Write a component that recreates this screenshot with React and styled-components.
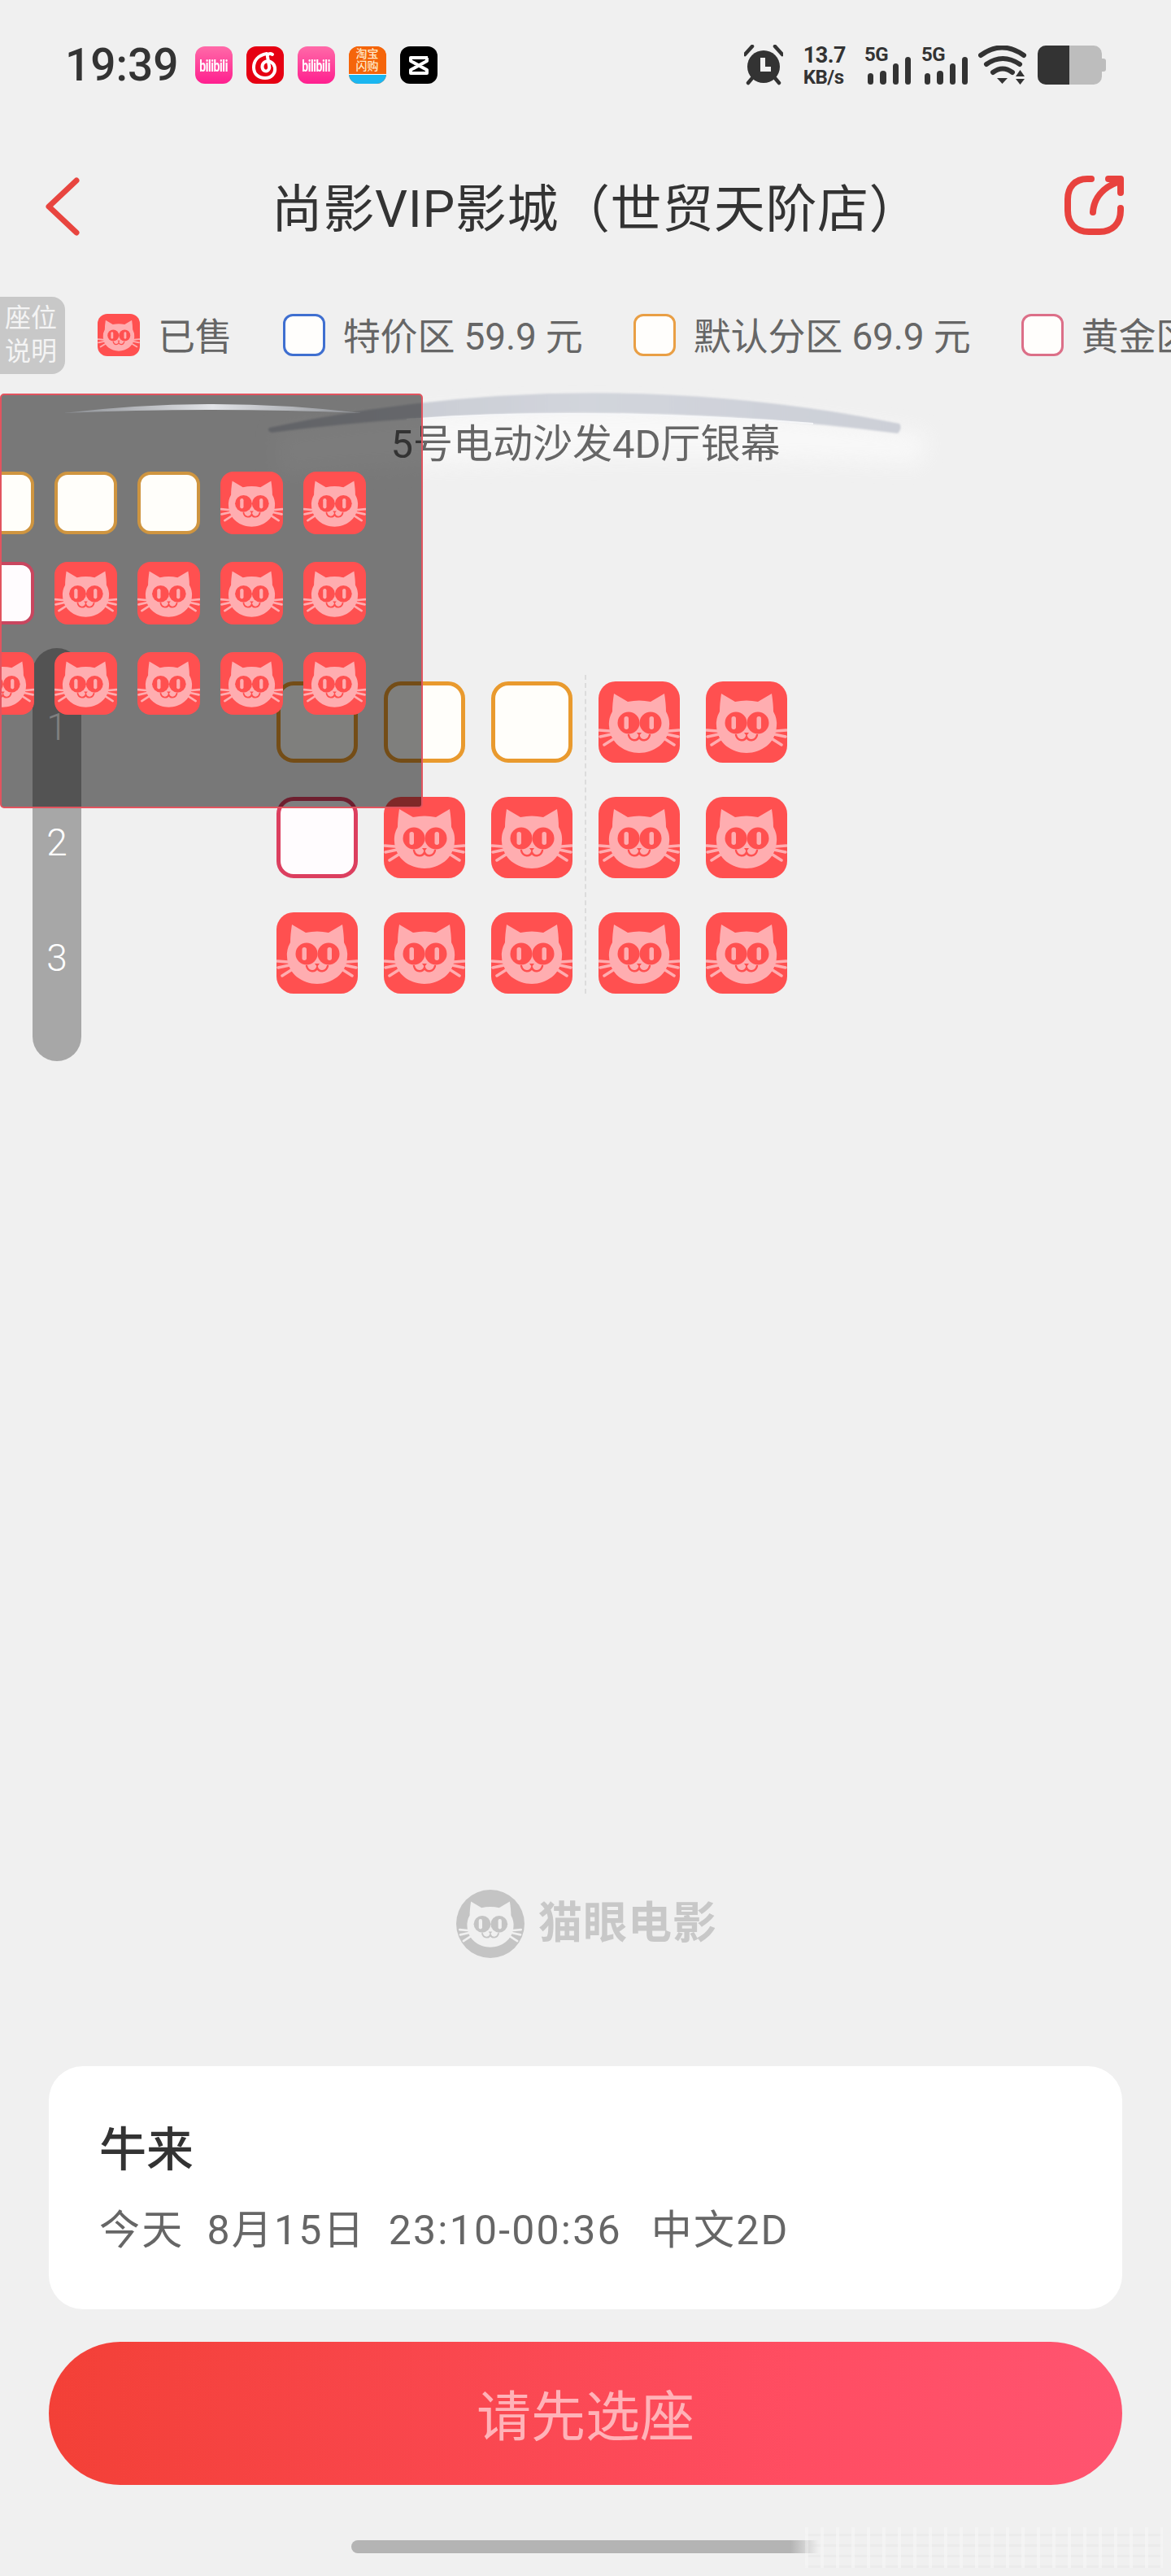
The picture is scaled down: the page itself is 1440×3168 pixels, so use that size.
import React from 'react';
import styled, { createGlobalStyle } from 'styled-components';

const GlobalStyle = createGlobalStyle`
  html, body {
    margin: 0;
    padding: 0;
    background: #f0f0f0;
  }
  * {
    box-sizing: border-box;
  }
`;

const FONT = `Roboto, "Noto Sans CJK SC", sans-serif`;

const Page = styled.div`
  width: 1440px;
  height: 3168px;
  display: flex;
  flex-direction: column;
  overflow: hidden;
  background: #f0f0f0;
  font-family: ${FONT};
  color: #333;
`;

/* status bar */
const StatusBar = styled.div`
  height: 160px;
  flex: none;
  display: flex;
  align-items: center;
  padding: 0 80px;
`;

const Time = styled.div`
  font-size: 55px;
  font-weight: 500;
  line-height: 1;
  color: #333;
  margin-right: 20px;
`;

const AppIcons = styled.div`
  display: flex;
  gap: 17px;
`;

const AppIcon = styled.div`
  width: 46px;
  height: 46px;
  border-radius: 12px;
  overflow: hidden;
  display: flex;
  flex-direction: column;
  align-items: center;
  justify-content: center;
  background: ${(p) => p.$bg};
  color: #fff;
`;

const BiliText = styled.span`
  font-size: 14px;
  font-weight: 700;
  letter-spacing: -0.4px;
  line-height: 1;
  transform: scaleY(1.5);
`;

const TaobaoTop = styled.div`
  flex: 1;
  width: 100%;
  display: flex;
  align-items: center;
  justify-content: center;
  text-align: center;
  background: #f5650a;
  color: #ffe9c8;
  font-size: 14px;
  line-height: 15px;
  font-weight: 500;
`;

const TaobaoBottom = styled.div`
  height: 12px;
  width: 100%;
  flex: none;
  background: #1bb6f0;
  border-top: 1px solid #fff;
`;

const StatusRight = styled.div`
  margin-left: auto;
  display: flex;
  align-items: center;
  gap: 13px;
`;

const Speed = styled.div`
  display: flex;
  flex-direction: column;
  gap: 5px;
  margin: 0 10px 0 12px;
  font-weight: 700;
  color: #333;
`;

const SpeedValue = styled.span`
  font-size: 27px;
  line-height: 24px;
  letter-spacing: -0.5px;
`;

const SpeedUnit = styled.span`
  font-size: 24px;
  line-height: 20px;
  letter-spacing: -0.5px;
`;

const Signal = styled.div`
  position: relative;
  width: 57px;
  height: 48px;
  display: flex;
  align-items: flex-end;
  gap: 8px;
  padding-left: 4px;
`;

const SignalLabel = styled.span`
  position: absolute;
  left: 0;
  top: 0;
  font-size: 24px;
  font-weight: 700;
  line-height: 22px;
  letter-spacing: -0.5px;
  color: #333;
`;

const SignalBar = styled.div`
  width: 8px;
  height: ${(p) => p.$h}px;
  border-radius: 4px;
  background: #333;
`;

const Battery = styled.div`
  position: relative;
  width: 79px;
  height: 48px;
  margin-right: 5px;
  border-radius: 10px;
  background: #bdbdbd;

  &::after {
    content: '';
    position: absolute;
    right: -5px;
    top: 16px;
    width: 5px;
    height: 16px;
    border-radius: 0 3px 3px 0;
    background: #bdbdbd;
  }
`;

const BatteryLevel = styled.div`
  width: 39px;
  height: 100%;
  border-radius: 10px 0 0 10px;
  background: #333;
`;

/* nav */
const Nav = styled.div`
  height: 188px;
  flex: none;
  display: flex;
  align-items: center;
  justify-content: space-between;
  padding: 0 56px;
`;

const Title = styled.div`
  font-size: 63px;
  font-weight: 400;
  line-height: 1.2;
  letter-spacing: 0.6px;
  padding: 8px 0 0 60px;
  color: #333;
  white-space: nowrap;
`;

/* legend */
const Legend = styled.div`
  height: 128px;
  flex: none;
  display: flex;
  align-items: center;
  gap: 62px;
  overflow: hidden;
  white-space: nowrap;
`;

const SeatNote = styled.div`
  width: 80px;
  height: 95px;
  flex: none;
  margin-right: -22px;
  padding-left: 6px;
  border-radius: 0 16px 16px 0;
  background: #c8c8c8;
  color: #f4f4f4;
  font-size: 32px;
  line-height: 41px;
  display: flex;
  align-items: center;
`;

const LegendItem = styled.div`
  display: flex;
  align-items: center;
  gap: 22px;
  flex: none;
  font-size: 46px;
  line-height: 52px;
  color: #666;
`;

const LegendText = styled.span`
  padding-top: 3px;
  letter-spacing: -0.15px;
`;

const LegendSold = styled.div`
  width: 52px;
  height: 52px;
  border-radius: 12px;
  overflow: hidden;
`;

const LegendBox = styled.div`
  width: 52px;
  height: 52px;
  border-radius: 12px;
  background: #fffefc;
  border: 3px solid ${(p) => p.$color};
`;

/* hall */
const Hall = styled.div`
  position: relative;
  flex: 1;
  min-height: 0;
`;

const ScreenBlock = styled.div`
  position: relative;
  display: flex;
  justify-content: center;
  padding-top: 42px;
`;

const ScreenArc = styled.svg`
  position: absolute;
  left: 300px;
  top: -30px;
  width: 860px;
  height: 170px;
`;

const ScreenLabel = styled.div`
  position: relative;
  font-size: 49px;
  line-height: 58px;
  color: #666;
  white-space: nowrap;
`;

const SeatGrid = styled.div`
  position: relative;
  display: grid;
  grid-template-columns: repeat(5, 100px);
  gap: 42px 32px;
  width: 628px;
  margin: 262px 0 0 340px;
`;

const CenterLine = styled.div`
  position: absolute;
  left: 379px;
  top: -8px;
  bottom: 0;
  border-left: 2px dashed #dcdcdc;
`;

const Seat = styled.div`
  width: ${(p) => (p.$mini ? 77 : 100)}px;
  height: ${(p) => (p.$mini ? 77 : 100)}px;
  border-radius: ${(p) => (p.$mini ? 16 : 21)}px;
  overflow: hidden;
  ${(p) =>
    p.$border
      ? `border: ${p.$mini ? 4 : 5}px solid ${p.$border}; background: ${p.$fill};`
      : ''}
`;

const RowRail = styled.div`
  position: absolute;
  left: 40px;
  top: 321px;
  width: 60px;
  height: 508px;
  padding-top: 67px;
  border-radius: 30px;
  background: rgba(0, 0, 0, 0.3);
  display: flex;
  flex-direction: column;
  align-items: center;
  gap: 82px;
`;

const RowNumber = styled.div`
  font-size: 46px;
  line-height: 60px;
  font-weight: 300;
  color: #fff;
`;

const MiniMap = styled.div`
  position: absolute;
  left: 0;
  top: 8px;
  width: 520px;
  height: 510px;
  border: 2px solid #e2545f;
  border-radius: 5px;
  background: rgba(0, 0, 0, 0.5);
  overflow: hidden;
`;

const MiniArc = styled.svg`
  position: absolute;
  left: 70px;
  top: 4px;
  width: 380px;
  height: 24px;
`;

const MiniGrid = styled.div`
  display: grid;
  grid-template-columns: repeat(5, 77px);
  gap: 34px 25px;
  width: 485px;
  margin: 94px 0 0 -37px;
`;

/* logo */
const LogoRow = styled.div`
  flex: none;
  height: 84px;
  margin-bottom: 133px;
  display: flex;
  align-items: center;
  padding-left: 561px;
  gap: 17px;
`;

const LogoText = styled.div`
  font-size: 54px;
  font-weight: 700;
  line-height: 1;
  letter-spacing: 1px;
  color: #c8c8c8;
`;

/* bottom */
const InfoCard = styled.div`
  flex: none;
  height: 299px;
  margin: 0 60px;
  padding: 66px 62px 0;
  border-radius: 42px;
  background: #fff;
`;

const MovieName = styled.div`
  font-size: 58px;
  font-weight: 500;
  line-height: 74px;
  color: #333;
`;

const ShowInfo = styled.div`
  display: flex;
  gap: 28px;
  margin-top: 30px;
  font-size: 50px;
  line-height: 64px;
  letter-spacing: 2.2px;
  color: #666;
  white-space: nowrap;
`;

const ShowLang = styled.span`
  margin-left: 8px;
`;

const ConfirmButton = styled.div`
  flex: none;
  height: 176px;
  margin: 40px 60px 0;
  padding-bottom: 3px;
  border-radius: 88px;
  background: linear-gradient(90deg, #f34037 0%, #ff4d62 70%, #ff5470 100%);
  color: #ffb2b8;
  font-size: 67px;
  display: flex;
  align-items: center;
  justify-content: center;
`;

const HomeArea = styled.div`
  position: relative;
  flex: none;
  height: 112px;
  padding: 68px 0 0 432px;
`;

const HomeBar = styled.div`
  width: 575px;
  height: 16px;
  border-radius: 8px 0 0 8px;
  background: linear-gradient(90deg, #b4b4b4 0 94%, rgba(180, 180, 180, 0) 100%);
`;

const Watermark = styled.div`
  position: absolute;
  left: 990px;
  top: 52px;
  width: 440px;
  height: 50px;
  opacity: 0.4;
  background:
    repeating-linear-gradient(90deg, rgba(255, 255, 255, 0.7) 0 4px, transparent 4px 19px),
    repeating-linear-gradient(0deg, rgba(215, 215, 215, 0.5) 0 3px, transparent 3px 13px);
`;

const CatFace = ({ head = '#ffadb0', eye = '#ff5050', transform }) => (
  <g transform={transform}>
    <path
      d="M19 15 L36 25 Q50 22 64 25 L81 15 Q83 28 83 37 Q88 46 87 55 C86 76 68 88 50 88 C32 88 14 76 13 55 Q12 46 17 37 Q17 28 19 15 Z"
      fill={head}
    />
    <g stroke={head} strokeWidth="3.5" strokeLinecap="round" fill="none">
      <path d="M1 60 L14 61 M2 68 L16 65 M7 78 L18 71" />
      <path d="M99 60 L86 61 M98 68 L84 65 M93 78 L82 71" />
    </g>
    <circle cx="37" cy="51" r="13.5" fill={eye} />
    <circle cx="64" cy="51" r="13.5" fill={eye} />
    <rect x="31.5" y="43" width="5.5" height="16" rx="2.7" fill={head} />
    <rect x="62.5" y="43" width="5.5" height="16" rx="2.7" fill={head} />
    <path
      d="M37 66 C39 74 48 74 50 68 C52 74 61 74 63 66"
      fill="none"
      stroke={eye}
      strokeWidth="2.4"
      strokeLinecap="round"
    />
    <path d="M47 63 L53 63 L50 67 Z" fill={eye} />
  </g>
);

const SoldIcon = () => (
  <svg viewBox="0 0 100 100" width="100%" height="100%" style={{ display: 'block' }}>
    <rect width="100" height="100" fill="#ff5050" />
    <CatFace />
  </svg>
);

const Bili = () => (
  <AppIcon $bg="linear-gradient(180deg, #ff6aa8, #ff1f8f)">
    <BiliText>bilibili</BiliText>
  </AppIcon>
);

const BackIcon = () => (
  <svg width="44" height="72" viewBox="0 0 44 72" fill="none">
    <path d="M38 4 L4 36 L38 68" stroke="#e8453f" strokeWidth="7" strokeLinecap="round" strokeLinejoin="round" />
  </svg>
);

const ShareIcon = () => (
  <svg width="78" height="78" viewBox="1305 214 78 78" fill="none" stroke="#e8423e" strokeWidth="8" strokeLinecap="round" strokeLinejoin="round">
    <path d="M1341 219 L1336 219 C1321 219 1312 229 1312 244 L1312 258 C1312 274 1322 284 1338 284 L1351 284 C1367 284 1377 274 1377 258 L1377 255" />
    <path d="M1343 260 C1344 243 1355 230 1373 223" />
    <path d="M1362 219 L1377 219 L1377 236" />
  </svg>
);

const AlarmIcon = () => (
  <svg width="48" height="50" viewBox="0 0 48 50">
    <circle cx="24" cy="27" r="20" fill="#333" />
    <path d="M1 12 L10 2 M47 12 L38 2 M5 47 L10 41 M43 47 L38 41" stroke="#333" strokeWidth="4.5" strokeLinecap="round" />
    <path d="M23 16 L23 30 L33 30" fill="none" stroke="#f0f0f0" strokeWidth="6" />
  </svg>
);

const WifiIcon = () => (
  <svg width="60" height="48" viewBox="0 0 60 48" fill="none">
    <path d="M3 12 Q29 -7 56 12" stroke="#333" strokeWidth="6" strokeLinecap="round" />
    <path d="M10 23 Q30 9 51 23" stroke="#333" strokeWidth="6" strokeLinecap="round" />
    <path d="M18 33 Q30 24 42 33" stroke="#333" strokeWidth="6" strokeLinecap="round" />
    <path d="M23 40 L36 40 L29.5 47 Z M46 38 L57 38 L51.5 30 Z M46 41 L57 41 L51.5 48 Z" fill="#333" />
  </svg>
);

const NeteaseIcon = () => (
  <svg width="46" height="46" viewBox="0 0 46 46" fill="none">
    <path
      d="M25 9 C14 11 9 18 9 26 C9 34 15 39 23 39 C31 39 36 33 35 26 C34 20 28 17 23 19 C19 21 18 27 22 30 C26 32 29 28 28 24 L26 13 C25.5 9 29 8 32 10"
      stroke="#fff"
      strokeWidth="4"
      strokeLinecap="round"
    />
  </svg>
);

const CapcutIcon = () => (
  <svg width="46" height="46" viewBox="0 0 46 46" fill="none">
    <path d="M34 14 L13 14 L13 18 L33 29 L33 33 L13 33 L13 29 L33 18 L33 14" stroke="#fff" strokeWidth="4" strokeLinejoin="round" />
  </svg>
);

const bars = [14, 17, 26, 34];

const SignalIcon = () => (
  <Signal>
    <SignalLabel>5G</SignalLabel>
    {bars.map((h, i) => (
      <SignalBar key={i} $h={h} />
    ))}
  </Signal>
);

// o = orange seat, p = pink seat, x = sold
const allSeats = 'oooxxpxxxxxxxxx'.split('');

const SeatCell = ({ kind, mini }) => {
  if (kind === 'x') {
    return (
      <Seat $mini={mini}>
        <SoldIcon />
      </Seat>
    );
  }
  const fill = kind === 'o' ? '#fffefa' : '#fffcfe';
  if (mini) {
    return <Seat $mini $fill={fill} $border={kind === 'o' ? '#cf9540' : '#c9465f'} />;
  }
  return <Seat $fill={fill} $border={kind === 'o' ? '#e99a2e' : '#dc3f5f'} />;
};

const App = () => {
  return (
    <Page>
      <GlobalStyle />
      <StatusBar>
        <Time>19:39</Time>
        <AppIcons>
          <Bili />
          <AppIcon $bg="#e60012">
            <NeteaseIcon />
          </AppIcon>
          <Bili />
          <AppIcon $bg="#f5650a">
            <TaobaoTop>
              淘宝
              <br />
              闪购
            </TaobaoTop>
            <TaobaoBottom />
          </AppIcon>
          <AppIcon $bg="#000">
            <CapcutIcon />
          </AppIcon>
        </AppIcons>
        <StatusRight>
          <AlarmIcon />
          <Speed>
            <SpeedValue>13.7</SpeedValue>
            <SpeedUnit>KB/s</SpeedUnit>
          </Speed>
          <SignalIcon />
          <SignalIcon />
          <WifiIcon />
          <Battery>
            <BatteryLevel />
          </Battery>
        </StatusRight>
      </StatusBar>

      <Nav>
        <BackIcon />
        <Title>尚影VIP影城（世贸天阶店）</Title>
        <ShareIcon />
      </Nav>

      <Legend>
        <SeatNote>
          座位
          <br />
          说明
        </SeatNote>
        <LegendItem>
          <LegendSold>
            <SoldIcon />
          </LegendSold>
          <LegendText>已售</LegendText>
        </LegendItem>
        <LegendItem>
          <LegendBox $color="#3f6fd0" />
          <LegendText>特价区 59.9 元</LegendText>
        </LegendItem>
        <LegendItem>
          <LegendBox $color="#e99f45" />
          <LegendText>默认分区 69.9 元</LegendText>
        </LegendItem>
        <LegendItem>
          <LegendBox $color="#dc6f88" />
          <LegendText>黄金区</LegendText>
        </LegendItem>
      </Legend>

      <Hall>
        <ScreenBlock>
          <ScreenArc viewBox="300 446 860 170">
            <defs>
              <filter id="glow" x="-20%" y="-100%" width="140%" height="300%">
                <feGaussianBlur stdDeviation="12" />
              </filter>
              <filter id="soft" x="-5%" y="-20%" width="110%" height="140%">
                <feGaussianBlur stdDeviation="1" />
              </filter>
              <linearGradient id="arcFill" x1="0" x2="1" y1="0" y2="0">
                <stop offset="0" stopColor="#c4c7cf" />
                <stop offset="0.5" stopColor="#d2d5dc" />
                <stop offset="1" stopColor="#cccfd7" />
              </linearGradient>
            </defs>
            <path
              d="M340 530 Q720 470 1140 535 L1130 570 Q720 550 340 585 Z"
              fill="#fbfbfb"
              opacity="0.75"
              filter="url(#glow)"
            />
            <path
              d="M331 526 Q720 443 1106 521 Q1110 526 1104 533 Q720 483 334 532 Q328 530 331 526 Z"
              fill="url(#arcFill)"
              filter="url(#soft)"
            />
            <path d="M500 516 Q720 500 1000 521" stroke="#f6f7f9" strokeWidth="2" fill="none" />
          </ScreenArc>
          <ScreenLabel>5号电动沙发4D厅银幕</ScreenLabel>
        </ScreenBlock>

        <SeatGrid>
          <CenterLine />
          {allSeats.map((kind, i) => (
            <SeatCell key={i} kind={kind} />
          ))}
        </SeatGrid>

        <RowRail>
          <RowNumber>1</RowNumber>
          <RowNumber>2</RowNumber>
          <RowNumber>3</RowNumber>
        </RowRail>

        <MiniMap>
          <MiniArc viewBox="70 490 380 24">
            <defs>
              <linearGradient id="miniFill" x1="0" x2="1" y1="0" y2="0">
                <stop offset="0" stopColor="#8a8d92" />
                <stop offset="0.5" stopColor="#e2e4e8" />
                <stop offset="1" stopColor="#8a8d92" />
              </linearGradient>
            </defs>
            <path d="M76 508 Q260 486 443 508 Q260 500 76 508 Z" fill="url(#miniFill)" />
          </MiniArc>
          <MiniGrid>
            {allSeats.map((kind, i) => (
              <SeatCell key={i} kind={kind} mini />
            ))}
          </MiniGrid>
        </MiniMap>
      </Hall>

      <LogoRow>
        <svg width="84" height="84" viewBox="0 0 84 84">
          <circle cx="42" cy="42" r="42" fill="#c4c4c4" />
          <CatFace head="#f0f0f0" eye="#c4c4c4" transform="translate(3.5 3) scale(0.77)" />
        </svg>
        <LogoText>猫眼电影</LogoText>
      </LogoRow>

      <InfoCard>
        <MovieName>牛来</MovieName>
        <ShowInfo>
          <span>今天</span>
          <span>8月15日</span>
          <span>23:10-00:36</span>
          <ShowLang>中文2D</ShowLang>
        </ShowInfo>
      </InfoCard>

      <ConfirmButton>请先选座</ConfirmButton>

      <HomeArea>
        <HomeBar />
        <Watermark />
      </HomeArea>
    </Page>
  );
};

export default App;
